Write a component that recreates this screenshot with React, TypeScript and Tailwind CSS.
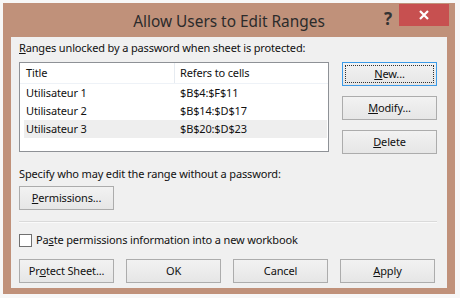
const font = { fontFamily: '"Noto Sans", "Liberation Sans", sans-serif' };

const Btn = ({
  children,
  primary,
  className = "",
}: {
  children: React.ReactNode;
  primary?: boolean;
  className?: string;
}) => (
  <div
    className={`h-[24px] w-[95px] flex items-center justify-center text-[11px] tracking-[-0.15px] text-[#111] bg-gradient-to-b from-[#f2f2f2] to-[#e6e6e6] border ${
      primary ? "border-[#3c9be8]" : "border-[#acacac]"
    } ${className}`}
  >
    {primary ? (
      <div className="w-[89px] h-[18px] border border-dotted border-[#333] flex items-center justify-center">
        {children}
      </div>
    ) : (
      children
    )}
  </div>
);

const Row = ({ name, cells, active }: { name: string; cells: string; active?: boolean }) => (
  <div className={`h-[18px] flex items-center ml-[4px] mr-[1px] ${active ? "bg-[#eeeeee]" : ""}`}>
    <span className="w-[156px] pl-[2px]">{name}</span>
    <span>{cells}</span>
  </div>
);

export default function App() {
  return (
    <div className="w-[460px] h-[298px] bg-[#f7f7f7] pt-[3px] pl-[3px]" style={font}>
      <div className="w-[452px] h-[291px] bg-[#c0917a] flex flex-col px-[8px] pb-[6px]">
        <div className="h-[34px] relative flex items-center justify-center">
          <span className="text-[15.4px] text-[#2b2b2b] pt-[4px]">Allow Users to Edit Ranges</span>
          <span className="absolute right-[55px] top-[3px] text-[17px] font-bold text-[#333]">?</span>
          <div className="absolute right-[-2px] top-[1px] w-[50px] h-[22px] bg-[#c75050] flex items-center justify-center">
            <svg width="10" height="10" viewBox="0 0 10 10">
              <path d="M1 1 L9 9 M9 1 L1 9" stroke="#fff" strokeWidth="2.2" />
            </svg>
          </div>
        </div>
        <div className="flex-1 bg-[#f0f0f0] pl-[8px] pr-[10px] text-[11px] tracking-[-0.15px] text-[#111] flex flex-col">
          <div className="mt-[3px] h-[16px] leading-[16px]">
            <u>R</u>anges unlocked by a password when sheet is protected:
          </div>
          <div className="mt-[6px] flex gap-[13px]">
            <div className="w-[313px] h-[90px] border border-[#8e9196] bg-white">
              <div className="h-[21px] flex items-center border-b border-[#eef2f7]">
                <span className="w-[155px] h-full flex items-center pl-[6px] border-r border-[#e6ebf1]">Title</span>
                <span className="pl-[5px]">Refers to cells</span>
              </div>
              <Row name="Utilisateur 1" cells="$B$4:$F$11" />
              <Row name="Utilisateur 2" cells="$B$14:$D$17" />
              <Row name="Utilisateur 3" cells="$B$20:$D$23" active />
            </div>
            <div className="flex flex-col gap-[10px]">
              <Btn primary>
                <span><u>N</u>ew...</span>
              </Btn>
              <Btn>
                <span><u>M</u>odify...</span>
              </Btn>
              <Btn>
                <span><u>D</u>elete</span>
              </Btn>
            </div>
          </div>
          <div className="mt-[12px] h-[16px] leading-[16px]">
            Specify who may edit the range without a password:
          </div>
          <Btn className="mt-[4px]">
            <span><u>P</u>ermissions...</span>
          </Btn>
          <div className="mt-[11px] mr-[0px] border-t border-[#dadada] border-b border-b-[#fafafa]" />
          <div className="mt-[10px] flex items-center gap-[4px] h-[14px]">
            <div className="w-[13px] h-[13px] bg-white border border-[#707070]" />
            <span>
              Pa<u>s</u>te permissions information into a new workbook
            </span>
          </div>
          <div className="mt-[12px] flex gap-[12px]">
            <Btn>
              <span>Pr<u>o</u>tect Sheet...</span>
            </Btn>
            <Btn>OK</Btn>
            <Btn>Cancel</Btn>
            <Btn>
              <span><u>A</u>pply</span>
            </Btn>
          </div>
        </div>
      </div>
    </div>
  );
}
